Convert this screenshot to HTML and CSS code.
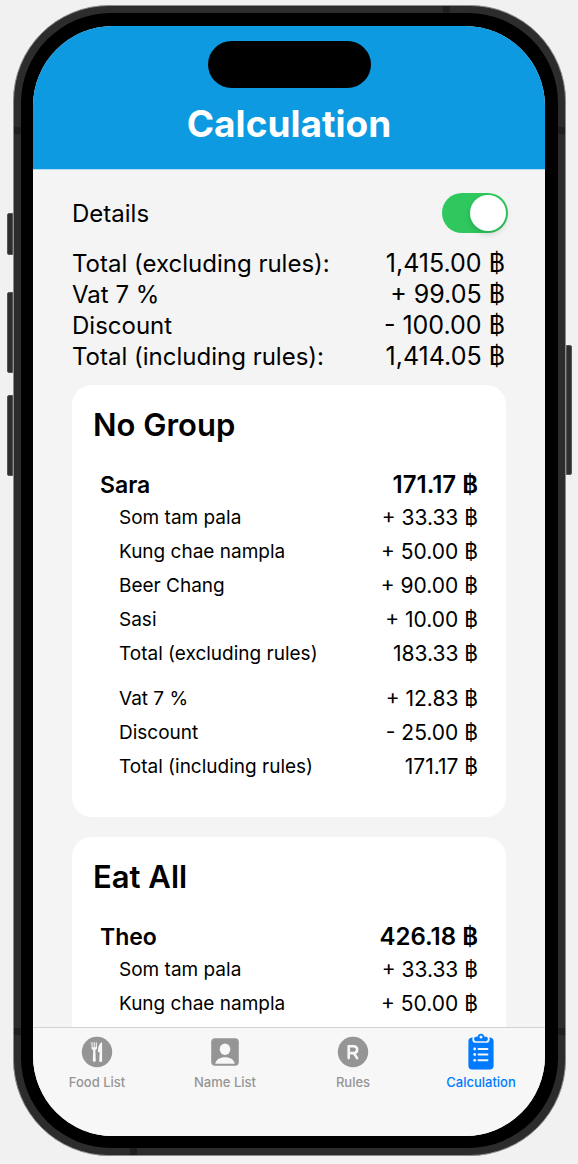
FILE: index.html
```html
<!DOCTYPE html>
<html lang="en">
<head>
<meta charset="utf-8">
<meta name="viewport" content="width=device-width, initial-scale=1">
<title>Calculation</title>
<link rel="stylesheet" href="styles.css">
</head>
<body>
<div class="stage">
  <div class="phone">
    <span class="key key-action"></span>
    <span class="key key-up"></span>
    <span class="key key-down"></span>
    <span class="key key-power"></span>
    <span class="band band-top"></span>
    <span class="band band-bottom"></span>
    <span class="band band-left-high"></span>
    <span class="band band-left-low"></span>
    <span class="band band-right-high"></span>
    <span class="band band-right-low"></span>
    <div class="bezel">
      <div class="screen">
        <header class="header">
          <div class="island"></div>
          <h1 class="title">Calculation</h1>
        </header>

        <main class="content">
          <div class="details">
            <label for="details">Details</label>
            <input class="switch" type="checkbox" role="switch" id="details" checked>
          </div>

          <table class="summary">
            <tbody>
              <tr><th scope="row">Total (excluding rules):</th><td>1,415.00 ฿</td></tr>
              <tr><th scope="row">Vat 7 %</th><td>+ 99.05 ฿</td></tr>
              <tr><th scope="row">Discount</th><td>- 100.00 ฿</td></tr>
              <tr><th scope="row">Total (including rules):</th><td>1,414.05 ฿</td></tr>
            </tbody>
          </table>

          <section class="card">
            <h2 class="group">No Group</h2>
            <table class="bill">
              <thead>
                <tr><th scope="row">Sara</th><td>171.17 ฿</td></tr>
              </thead>
              <tbody>
                <tr><th scope="row">Som tam pala</th><td>+ 33.33 ฿</td></tr>
                <tr><th scope="row">Kung chae nampla</th><td>+ 50.00 ฿</td></tr>
                <tr><th scope="row">Beer Chang</th><td>+ 90.00 ฿</td></tr>
                <tr><th scope="row">Sasi</th><td>+ 10.00 ฿</td></tr>
                <tr><th scope="row">Total (excluding rules)</th><td>183.33 ฿</td></tr>
              </tbody>
              <tbody class="rules">
                <tr><th scope="row">Vat 7 %</th><td>+ 12.83 ฿</td></tr>
                <tr><th scope="row">Discount</th><td>- 25.00 ฿</td></tr>
                <tr><th scope="row">Total (including rules)</th><td>171.17 ฿</td></tr>
              </tbody>
            </table>
          </section>

          <section class="card">
            <h2 class="group">Eat All</h2>
            <table class="bill">
              <thead>
                <tr><th scope="row">Theo</th><td>426.18 ฿</td></tr>
              </thead>
              <tbody>
                <tr><th scope="row">Som tam pala</th><td>+ 33.33 ฿</td></tr>
                <tr><th scope="row">Kung chae nampla</th><td>+ 50.00 ฿</td></tr>
              </tbody>
            </table>
          </section>
        </main>

        <nav class="tabs">
          <a class="tab" href="#food">
            <svg class="icon" viewBox="0 0 36 36" aria-hidden="true">
              <circle cx="18" cy="18" r="15.2" fill="currentColor"/>
              <path fill="#f7f7f7" d="M11.7 8.2h.9v5h.9v-5h.8v5h.9v-5h.8v5h.8v-5h.9l.3 5.500c0 1.300-.8 2-1.600 2.300l.4 10.500c0 1.800-3 1.800-3 0l.4-10.500c-.9-.3-1.800-1-1.800-2.300zM23.100 7.900v18.800c0 1.700-2.900 1.700-2.900 0l.4-8.100-1.700-.9c0-4.500 1.200-8.300 4.200-9.800z"/>
            </svg>
            <span>Food List</span>
          </a>
          <a class="tab" href="#names">
            <svg class="icon" viewBox="0 0 36 36" aria-hidden="true">
              <rect x="4.200" y="4.200" width="27.600" height="27.600" rx="4" fill="currentColor"/>
              <ellipse cx="18" cy="15.300" rx="5.300" ry="5.700" fill="#f7f7f7"/>
              <path fill="#f7f7f7" d="M8.200 29.800c.8-4.600 5-6.600 9.800-6.600s9 2 9.800 6.600z"/>
            </svg>
            <span>Name List</span>
          </a>
          <a class="tab" href="#rules">
            <svg class="icon" viewBox="0 0 36 36" aria-hidden="true">
              <circle cx="18" cy="18" r="15.200" fill="currentColor"/>
              <path fill="none" stroke="#f7f7f7" stroke-width="2.600" stroke-linecap="round" stroke-linejoin="round" d="M13.700 24.100V12.200h4.700c5 0 5 6.900 0 6.900h-4.700M18.900 19.300l3.200 4.800"/>
            </svg>
            <span>Rules</span>
          </a>
          <a class="tab tab-active" href="#calculation" aria-current="page">
            <svg class="icon" viewBox="0 0 36 36" aria-hidden="true">
              <path fill="currentColor" d="M9.800 3.400C6.900 3.400 5.400 4.700 5.400 7.200v24.600c0 2.500 1.300 3.600 3.700 3.600h17.800c2.400 0 3.700-1.100 3.700-3.600V7.200c0-2.500-1.500-3.800-4.400-3.800 1.200 3-.2 5.400-2.800 5.400H12.600C10 8.800 8.600 6.400 9.800 3.400z"/>
              <path fill="currentColor" fill-rule="evenodd" d="M13 7.200c-2.500 0-2.500-4.500 0-4.500h1.600c.3-4 6.500-4 6.800 0H23c2.500 0 2.500 4.500 0 4.500zM18 1.500a1.500 1.500 0 1 0 0 3 1.500 1.500 0 1 0 0-3z"/>
              <path fill="none" stroke="#f7f7f7" stroke-width="1.900" stroke-linecap="round" d="M15.500 15h9M15.500 20.500h9M15.500 26.300h9"/>
              <g fill="#f7f7f7">
                <circle cx="11.700" cy="15" r="1.400"/>
                <circle cx="11.700" cy="20.500" r="1.400"/>
                <circle cx="11.700" cy="26.300" r="1.400"/>
              </g>
            </svg>
            <span>Calculation</span>
          </a>
        </nav>
      </div>
    </div>
  </div>
</div>
</body>
</html>
```
FILE: styles.css
```css
* {
  box-sizing: border-box;
}

body {
  margin: 0;
  background: #f1f1f1;
  color: #000;
  font-family: Inter, "Noto Sans", sans-serif;
}

.stage {
  display: flex;
  height: 100vh;
  padding: 5px 12px 8px 13px;
}

/* Device frame */

.phone {
  position: relative;
  display: flex;
  flex: 1;
  min-width: 0;
  padding: 7px;
  border: 1px solid #8c8c8c;
  border-radius: 96px;
  background: #2c2c2c;
}

.bezel {
  display: flex;
  flex: 1;
  min-width: 0;
  padding: 13px 13px 12px 12px;
  border-radius: 90px;
  background: #000;
}

.screen {
  display: flex;
  flex: 1;
  flex-direction: column;
  min-width: 0;
  overflow: hidden;
  border-radius: 80px;
  background: #f4f4f4;
}

.key {
  position: absolute;
  width: 6px;
  background: #2e2e2e;
  border: 1px solid #555;
}

.key-action,
.key-up,
.key-down {
  left: -7px;
  border-radius: 2px 0 0 2px;
}

.key-action {
  top: 207px;
  height: 42px;
}

.key-up {
  top: 286px;
  height: 81px;
}

.key-down {
  top: 389px;
  height: 81px;
}

.key-power {
  top: 339px;
  right: -7px;
  height: 130px;
  border-radius: 0 2px 2px 0;
}

.band {
  position: absolute;
  width: 7px;
  height: 7px;
  background: #1f1f1f;
}

.band-top {
  top: 0;
  right: 115px;
}

.band-bottom {
  bottom: 0;
  left: 116px;
}

.band-left-high,
.band-right-high {
  top: 121px;
}

.band-left-low,
.band-right-low {
  bottom: 120px;
}

.band-left-high,
.band-left-low {
  left: 0;
}

.band-right-high,
.band-right-low {
  right: 0;
}

/* Header */

.header {
  display: flex;
  flex: none;
  flex-direction: column;
  align-items: center;
  padding: 15px 0 21px;
  border-bottom: 1px solid #b4dcf3;
  background: #0d9ae0;
}

.island {
  width: 163px;
  height: 47px;
  border-radius: 24px;
  background: #000;
}

.title {
  margin: 12px 0 0;
  color: #fff;
  font-size: 37px;
  font-weight: 700;
  line-height: 48px;
}

/* Content */

.content {
  flex: 1;
  min-height: 0;
  overflow-y: auto;
  padding-top: 23px;
  scrollbar-width: none;
}

.details {
  display: flex;
  align-items: center;
  justify-content: space-between;
  padding: 0 37px 0 39px;
  font-size: 24px;
}

.switch {
  width: 66px;
  height: 40px;
  margin: 0;
  padding: 2px;
  appearance: none;
  border-radius: 20px;
  background: #d9d9dc;
}

.switch::before {
  display: block;
  width: 36px;
  height: 36px;
  border-radius: 50%;
  background: #fff;
  box-shadow: 0 3px 6px rgba(0, 0, 0, 0.15);
  content: "";
}

.switch:checked {
  background: #2fc85f;
}

.switch:checked::before {
  margin-left: auto;
}

table {
  width: 100%;
  border-collapse: collapse;
}

th,
td {
  padding: 0;
  font-weight: 400;
  white-space: nowrap;
}

th {
  text-align: left;
}

td {
  text-align: right;
}

.summary {
  margin: 15px 0 13px;
  font-size: 25px;
  line-height: 31px;
}

.summary th {
  padding-left: 39px;
  font-size: 24px;
}

.summary td {
  padding-right: 40px;
}

.card {
  margin: 0 39px 20px;
  padding: 20px 0 33px;
  border-radius: 20px;
  background: #fff;
}

.group {
  margin: 0 21px 24px;
  font-size: 31px;
  font-weight: 600;
  line-height: 40px;
}

.bill {
  font-size: 21px;
  line-height: 34px;
}

.bill th {
  padding-left: 47px;
  font-size: 19px;
}

.bill td {
  padding-right: 28px;
}

.bill thead th,
.bill thead td {
  font-size: 23px;
  font-weight: 600;
  line-height: 32px;
}

.bill thead td {
  font-size: 24px;
}

.bill thead th {
  padding-left: 28px;
}

.rules tr:first-child > * {
  padding-top: 11px;
}

/* Tab bar */

.tabs {
  display: grid;
  flex: none;
  grid-template-columns: repeat(4, 1fr);
  padding: 6px 0 45px;
  border-top: 1px solid #d2d2d2;
  background: #f7f7f7;
}

.tab {
  display: flex;
  flex-direction: column;
  align-items: center;
  gap: 3px;
  color: #959595;
  font-size: 13px;
  font-weight: 500;
  line-height: 18px;
  text-decoration: none;
}

.tab-active {
  color: #007aff;
}

.icon {
  width: 36px;
  height: 36px;
  overflow: visible;
}
```
